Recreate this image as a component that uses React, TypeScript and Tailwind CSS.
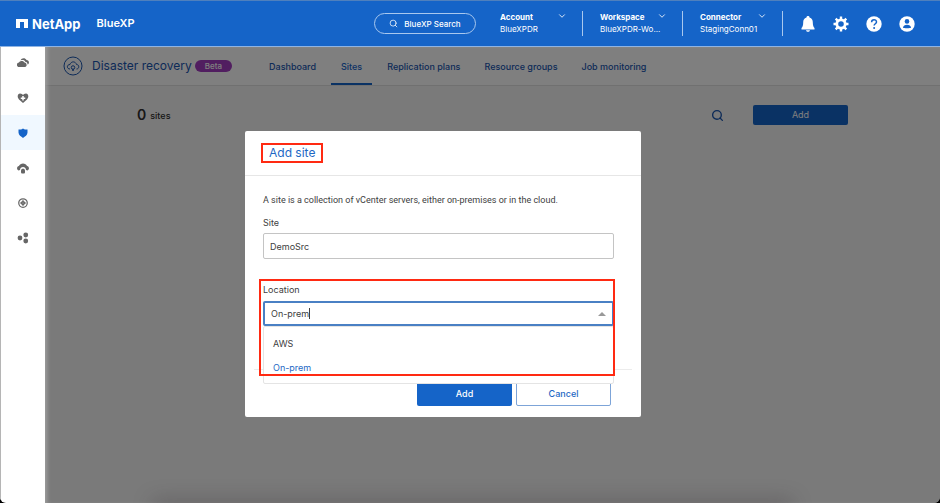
import { ChevronDown, Search } from "lucide-react";

const tabs = ["Dashboard", "Sites", "Replication plans", "Resource groups", "Job monitoring"];

const accounts = [
  { label: "Account", value: "BlueXPDR" },
  { label: "Workspace", value: "BlueXPDR-Wo..." },
  { label: "Connector", value: "StagingConn01" },
];

function CloudsIcon() {
  return (
    <svg viewBox="0 0 24 24" className="w-3 h-3" fill="currentColor">
      <path d="M7 7c2-5 9-6 12-1 5 0 7 7 2 9 0-4-2-5-4-5-2-4-6-5-10-3z" />
      <path d="M4 11c2-4 9-4 11 0 5 0 6 9 1 9H4c-6 0-5-9 0-9z" />
    </svg>
  );
}

function HeartIcon() {
  return (
    <svg viewBox="0 0 24 24" className="w-3 h-3" fill="currentColor">
      <path
        fillRule="evenodd"
        d="M12 22 4 15C-1 9 2 3 6 3c3 0 5 2 6 3 1-1 3-3 6-3 4 0 7 6 2 12zM10.500 8v3h-3v3h3v3h3v-3h3v-3h-3V8z"
      />
    </svg>
  );
}

function ShieldIcon() {
  return (
    <svg viewBox="0 0 24 24" className="w-3 h-3" fill="currentColor">
      <path d="M3 5c4 0 7 0 9-2 2 2 5 2 9 2v6c0 5-5 8-9 11-4-3-9-6-9-11z" />
    </svg>
  );
}

function CloudLockIcon() {
  return (
    <svg viewBox="0 0 24 24" className="w-3 h-3" fill="currentColor">
      <path d="M3 17c-4-2-4-8 1-9 2-7 14-7 16 0 5 1 5 7 1 9l-3-1c0-8-12-8-12 0z" />
      <path d="M8 17c0-5 8-5 8 0v3c0 2-1 3-3 3h-2c-2 0-3-1-3-3z" />
    </svg>
  );
}

function TargetIcon() {
  return (
    <svg viewBox="0 0 24 24" className="w-3 h-3" fill="none" stroke="currentColor" strokeWidth="2.500">
      <circle cx="12" cy="12" r="8.500" />
      <circle cx="12" cy="12" r="3" />
      <path d="M12 6v12M6 12h12" strokeWidth="2" />
    </svg>
  );
}

function NodesIcon() {
  return (
    <svg viewBox="0 0 24 24" className="w-3 h-3" fill="currentColor">
      <circle cx="6" cy="12" r="4.800" />
      <circle cx="17.500" cy="6" r="4.800" />
      <circle cx="17.500" cy="18" r="4.800" />
    </svg>
  );
}

function BellIcon() {
  return (
    <svg viewBox="0 0 16 16" className="w-4 h-4" fill="currentColor">
      <path d="M8 0c1 0 1.500.6 1.500 1.400C12 2.200 12.800 4 12.800 6.500c0 3 .7 4.500 1.700 5.500v1.500h-13V12c1-1 1.700-2.500 1.700-5.500 0-2.500.8-4.300 3.300-5.100C6.500.6 7 0 8 0zM6 14.200h4c-.3 1-1 1.600-2 1.600s-1.700-.6-2-1.600z" />
    </svg>
  );
}

function GearIcon() {
  return (
    <svg viewBox="0 0 16 16" className="w-4 h-4" fill="none" stroke="currentColor">
      <circle cx="8" cy="8" r="4.200" strokeWidth="2.800" />
      <path
        d="M8 .5v3M8 12.500v3M.5 8h3M12.500 8h3M2.700 2.700l2.100 2.100M11.200 11.200l2.100 2.100M2.700 13.300l2.100-2.100M11.200 4.800l2.100-2.100"
        strokeWidth="2.400"
      />
    </svg>
  );
}

function HelpIcon() {
  return (
    <svg viewBox="0 0 16 16" className="w-4 h-4">
      <circle cx="8" cy="8" r="7.700" fill="currentColor" />
      <path d="M5.600 6.200c0-3.400 4.900-3.200 4.900-.3 0 1.800-2.400 1.900-2.400 3.700" fill="none" stroke="#1564c8" strokeWidth="1.500" />
      <circle cx="8.100" cy="11.900" r="1" fill="#1564c8" />
    </svg>
  );
}

function UserIcon() {
  return (
    <svg viewBox="0 0 16 16" className="w-4 h-4">
      <circle cx="8" cy="8" r="7.700" fill="currentColor" />
      <circle cx="8" cy="5.400" r="2.300" fill="#1564c8" />
      <path d="M4 11.800c0-4 8-4 8 0-.4.600-7.600.6-8 0z" fill="#1564c8" />
    </svg>
  );
}

const sideItems = [
  { label: "Storage", icon: <CloudsIcon /> },
  { label: "Health", icon: <HeartIcon /> },
  { label: "Protection", icon: <ShieldIcon />, active: true },
  { label: "Governance", icon: <CloudLockIcon /> },
  { label: "Mobility", icon: <TargetIcon /> },
  { label: "Extensions", icon: <NodesIcon /> },
];

function Header() {
  return (
    <header className="flex items-center h-[47px] pl-4 pr-[25px] bg-[#1564c8] text-white border-t border-b border-t-[#4f80bd] border-b-[#8fb4e3]">
      <svg viewBox="0 0 24 18" className="w-3 h-[9px]" fill="currentColor">
        <path d="M0 0h24v18h-8V6H8v12H0z" />
      </svg>
      <span className="ml-1 text-[13px] leading-4 font-bold">NetApp</span>
      <span className="ml-4 text-[11px] font-semibold">BlueXP</span>

      <div className="flex items-center ml-auto">
        <button className="flex items-center justify-center gap-1.5 w-[102px] h-[21px] mr-6 rounded-full border border-[#a9c8ee] text-[8px] font-medium">
          <Search className="w-[9px] h-[9px]" />
          BlueXP Search
        </button>
        {accounts.map((a) => (
          <button
            key={a.label}
            className="flex items-start justify-between w-[83px] h-[25px] mr-[17px] pr-[15px] border-r border-[#a9c8ee] text-left text-[8px] leading-3"
          >
            <span className="whitespace-nowrap w-[57px]">
              <span className="block font-bold">{a.label}</span>
              <span className="block">{a.value}</span>
            </span>
            <ChevronDown className="shrink-0 w-[10px] h-[10px]" />
          </button>
        ))}
        <div className="flex items-center gap-[17px]">
          <button aria-label="Notifications"><BellIcon /></button>
          <button aria-label="Settings"><GearIcon /></button>
          <button aria-label="Help"><HelpIcon /></button>
          <button aria-label="User"><UserIcon /></button>
        </div>
      </div>
    </header>
  );
}

function Sidebar() {
  return (
    <nav className="w-[45px] shrink-0 bg-white border-l border-[#b5b5b5]">
      <div className="-mt-0.5">
        {sideItems.map((item) => (
          <button
            key={item.label}
            aria-label={item.label}
            className={
              item.active
                ? "flex items-center justify-center w-full h-[35px] bg-[#f0f8ff] text-[#1564c8]"
                : "flex items-center justify-center w-full h-[35px] text-[#666666]"
            }
          >
            {item.icon}
          </button>
        ))}
      </div>
    </nav>
  );
}

function AddSiteDialog() {
  return (
    <div role="dialog" aria-labelledby="dialog-title" className="w-[396px] h-fit rounded-xs bg-white text-[#404040] text-[9px]">
      <div className="flex items-center h-[45px] pl-4 border-b border-[#e6e6e6]">
        <h2 id="dialog-title" className="px-1.5 border-2 border-[#ff2a12] text-xs leading-4 text-[#1e68c4]">
          Add site
        </h2>
      </div>

      <div className="pl-[18px] pr-[27px] pt-[18px]">
        <p className="leading-3 font-['Roboto','Liberation_Sans',sans-serif]">
          A site is a collection of vCenter servers, either on-premises or in the cloud.
        </p>
        <label htmlFor="site" className="block mt-[11px] leading-3">Site</label>
        <input
          id="site"
          type="text"
          defaultValue="DemoSrc"
          className="block w-full h-[26px] mt-1 px-1.5 rounded-xs border border-[#c4c4c4]"
        />

        <div className="relative mt-[25px]">
          <label htmlFor="location" className="block leading-3">Location</label>
          <div className="flex items-center h-[25px] mt-[5px] pr-1.5 rounded-xs border-2 border-[#4a80c4]">
            <input
              id="location"
              type="text"
              role="combobox"
              aria-expanded="true"
              aria-controls="location-list"
              defaultValue="On-prem"
              className="w-11 pl-1.5 outline-none"
            />
            <span className="w-px h-[11px] bg-[#404040]" />
            <svg viewBox="0 0 8 4" className="w-2 h-1 ml-auto" fill="#999999">
              <path d="M4 0l4 4H0z" />
            </svg>
          </div>
          <ul
            id="location-list"
            role="listbox"
            className="absolute top-full inset-x-0 z-10 h-[58px] pt-[5px] rounded-xs border border-[#e4e4e4] bg-white"
          >
            <li role="option" aria-selected="false" className="flex items-center h-6 px-[9px]">AWS</li>
            <li role="option" aria-selected="true" className="flex items-center h-6 px-[9px] text-[#1e68c4]">On-prem</li>
          </ul>
          <div className="absolute -top-[5px] -left-1 -right-px h-[97px] z-20 border-2 border-[#ff2a12] pointer-events-none" />
        </div>
      </div>

      <div className="mx-[9px] mt-[43px] pt-3 pb-[11px] pr-[21px] flex justify-end gap-1 border-t border-[#ececec]">
        <button className="w-[95px] h-6 rounded-xs bg-[#1564c8] text-white font-medium">Add</button>
        <button className="w-[95px] h-6 rounded-xs border border-[#7da4d8] text-[#1e68c4] font-medium">Cancel</button>
      </div>
    </div>
  );
}

export default function App() {
  return (
    <div className="min-h-screen flex bg-black font-['Inter','Liberation_Sans',sans-serif]">
      <div className="flex flex-col grow rounded-b-md overflow-hidden">
        <Header />
        <div className="flex grow">
          <Sidebar />
          <main className="relative grow overflow-hidden bg-[#f4f4f4]">
            <div className="flex items-center h-[39px] pl-[18px] bg-white border-b border-[#e0e0e0] text-[#1a56b0]">
              <svg viewBox="0 0 40 40" className="w-5 h-5" fill="none" stroke="currentColor" strokeWidth="2">
                <circle cx="20" cy="20" r="18" />
                <path d="M14 26c-7 0-7-9 0-9 2-7 11-7 13 0 6 0 6 9 0 9" />
                <circle cx="20" cy="23" r="3.500" />
                <path d="M20 26v4" strokeWidth="3" />
              </svg>
              <h1 className="ml-[9px] text-xs whitespace-nowrap">Disaster recovery</h1>
              <span className="ml-[3px] px-[10px] rounded-full bg-[#a23cc0] text-white text-[8px] leading-3 font-medium">Beta</span>
              <nav className="flex self-stretch ml-[25px] text-[9px] font-medium">
                {tabs.map((tab) => (
                  <a
                    key={tab}
                    href="#"
                    className={
                      tab === "Sites"
                        ? "flex items-center pt-[3px] px-[10px] mx-[3px] border-b-2 border-[#1564c8] text-[#1a66cc] whitespace-nowrap"
                        : "flex items-center pt-[3px] px-3 border-b-2 border-transparent whitespace-nowrap"
                    }
                  >
                    {tab}
                  </a>
                ))}
              </nav>
            </div>

            <div className="flex items-center pt-[19px] pl-[92px] pr-[92px] text-[#303030]">
              <span className="text-sm leading-5 font-semibold">0</span>
              <span className="ml-1 pt-0.5 text-[9px] font-medium">sites</span>
              <button aria-label="Search" className="ml-auto mr-[29px] text-[#1a56b0]">
                <Search className="w-[13px] h-[13px]" strokeWidth={2.5} />
              </button>
              <button className="w-[95px] h-5 rounded-xs bg-[#1564c8] text-white text-[9px]">Add</button>
            </div>

            <div className="absolute inset-0 flex justify-center items-start pt-[84px] pr-[99px] bg-black/50 shadow-[inset_4px_0_4px_-2px_#a0a0a0]">
              <AddSiteDialog />
            </div>
            <div className="absolute top-full left-[110px] right-[150px] h-2 shadow-[0_0_20px_2px_rgba(50,40,45,0.35)]" />
          </main>
        </div>
      </div>
    </div>
  );
}
